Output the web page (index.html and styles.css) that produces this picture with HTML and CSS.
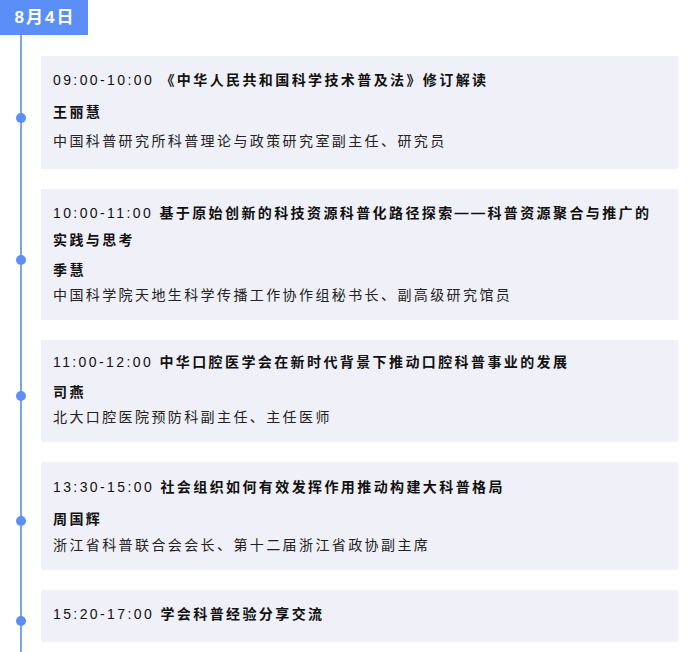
FILE: index.html
```html
<!DOCTYPE html>
<html lang="zh-CN">
<head>
<meta charset="utf-8">
<title>8月4日 日程</title>
<link rel="stylesheet" href="styles.css">
</head>
<body>
<div class="page">
  <div class="date">8月4日</div>
  <ul class="timeline">
    <li class="item">
      <span class="dot"></span>
      <div class="card card-a">
        <p class="title"><span class="time">09:00-10:00</span> 《中华人民共和国科学技术普及法》修订解读</p>
        <p class="name">王丽慧</p>
        <p class="org">中国科普研究所科普理论与政策研究室副主任、研究员</p>
      </div>
    </li>
    <li class="item">
      <span class="dot"></span>
      <div class="card">
        <p class="title"><span class="time">10:00-11:00</span> 基于原始创新的科技资源科普化路径探索——科普资源聚合与推广的实践与思考</p>
        <p class="name">季慧</p>
        <p class="org">中国科学院天地生科学传播工作协作组秘书长、副高级研究馆员</p>
      </div>
    </li>
    <li class="item">
      <span class="dot"></span>
      <div class="card card-c">
        <p class="title"><span class="time">11:00-12:00</span> 中华口腔医学会在新时代背景下推动口腔科普事业的发展</p>
        <p class="name">司燕</p>
        <p class="org">北大口腔医院预防科副主任、主任医师</p>
      </div>
    </li>
    <li class="item">
      <span class="dot"></span>
      <div class="card card-d">
        <p class="title"><span class="time">13:30-15:00</span> 社会组织如何有效发挥作用推动构建大科普格局</p>
        <p class="name">周国辉</p>
        <p class="org">浙江省科普联合会会长、第十二届浙江省政协副主席</p>
      </div>
    </li>
    <li class="item">
      <span class="dot"></span>
      <div class="card card-e">
        <p class="title"><span class="time">15:20-17:00</span> 学会科普经验分享交流</p>
      </div>
    </li>
  </ul>
</div>
</body>
</html>
```

FILE: styles.css
```css
* {
  box-sizing: border-box;
}

html, body {
  margin: 0;
  padding: 0;
  background: #ffffff;
}

body {
  font-family: "Liberation Sans", "Noto Sans CJK SC", sans-serif;
  font-size: 14px;
  color: #1a1a1a;
}

.page {
  width: 689px;
  height: 652px;
  overflow: hidden;
  padding-right: 11px;
}

.date {
  width: 88px;
  height: 35px;
  background: #5c8ef8;
  color: #ffffff;
  font-weight: bold;
  font-size: 17px;
  letter-spacing: 2px;
  line-height: 35px;
  text-align: center;
  padding-left: 2px;
}

.timeline {
  list-style: none;
  margin: 0 0 0 20px;
  padding: 21px 0 20px 19px;
  border-left: 2px solid #7ba4f6;
  display: flex;
  flex-direction: column;
  gap: 20px;
}

.item {
  position: relative;
}

.dot {
  position: absolute;
  left: -25px;
  top: 50%;
  width: 10px;
  height: 10px;
  border-radius: 50%;
  background: #5c8ef8;
}

.card {
  background: #f0f0f8;
  padding: 11px 12px 13px 12px;
  letter-spacing: 2.4px;
}

.card p {
  margin: 0;
}

.title {
  line-height: 27px;
  font-weight: bold;
  color: #111111;
}

.time {
  font-weight: normal;
}

.name {
  margin-top: 4px !important;
  line-height: 24px;
  font-weight: bold;
  color: #111111;
}

.org {
  margin-top: 1px !important;
  line-height: 24px;
  color: #222222;
}

.card-a {
  padding-bottom: 16px;
}

.card-a .name {
  margin-top: 6px !important;
}

.card-a .org {
  margin-top: 5px !important;
}

.card-c {
  padding-top: 9px;
}

.card-d {
  padding-top: 12px;
}

.card-d .name {
  margin-top: 6px !important;
}

.card-d .org {
  margin-top: 2px !important;
}

.card-e {
  padding-bottom: 14px;
}
```
